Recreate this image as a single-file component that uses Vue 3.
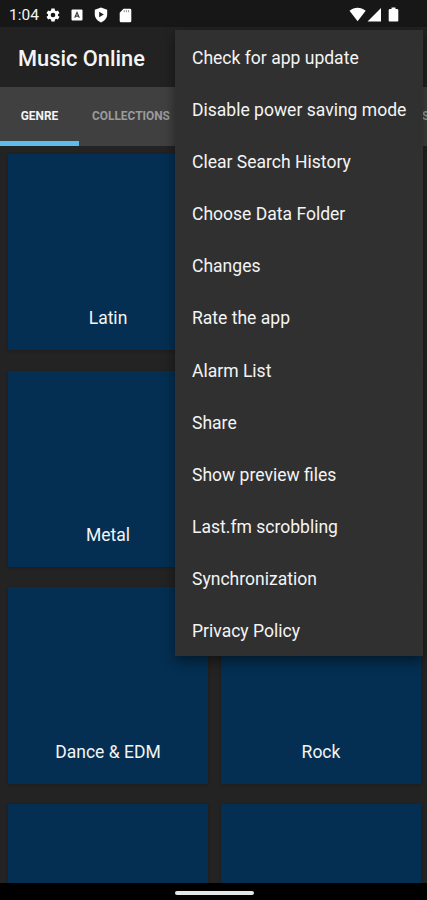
<script setup>
const menu = [
  'Check for app update',
  'Disable power saving mode',
  'Clear Search History',
  'Choose Data Folder',
  'Changes',
  'Rate the app',
  'Alarm List',
  'Share',
  'Show preview files',
  'Last.fm scrobbling',
  'Synchronization',
  'Privacy Policy',
]
const genres = ['Latin', '', 'Metal', '', 'Dance & EDM', 'Rock', '', '']
</script>

<template>
  <div class="screen">
    <header class="status">
      <span class="clock">1:04</span>
      <svg class="gear" viewBox="0 0 24 24"><path fill="#fff" fill-rule="evenodd" d="M19.4 13a7.8 7.8 0 0 0 0-2l2.3-1.800-2.300-4-2.700 1.100a7.500 7.500 0 0 0-1.800-1L14.500 2.400h-5L9.100 5.300a7.500 7.500 0 0 0-1.800 1L4.600 5.200l-2.300 4L4.600 11a7.800 7.800 0 0 0 0 2l-2.300 1.800 2.300 4 2.700-1.100a7.500 7.500 0 0 0 1.800 1l.4 2.900h5l.4-2.900a7.500 7.500 0 0 0 1.800-1l2.700 1.100 2.300-4zM12 15.500a3.500 3.500 0 1 1 0-7 3.500 3.500 0 0 1 0 7z" /></svg>
      <svg class="badge" viewBox="0 0 12 12"><rect x=".5" y=".5" width="11" height="11" rx="1" fill="#fff" /><path d="M3.700 8.700 6 3.400l2.300 5.300M4.600 7.100h2.800" fill="none" stroke="#333" stroke-width="1.100" /></svg>
      <svg class="shield" viewBox="0 0 14 16"><path d="M7 .5 13.200 2.700v4.600c0 3.800-2.600 6.700-6.200 8.200C3.400 14 .8 11.100.8 7.300V2.700z" fill="#fff" /><path d="M5.200 4.700v5.600L9.800 7.500z" fill="#222" /></svg>
      <svg class="card" viewBox="0 0 13 15"><path d="M4.500.8H11A1.300 1.300 0 0 1 12.300 2v11a1.300 1.300 0 0 1-1.300 1.300H2A1.300 1.300 0 0 1 .7 13V4.800z" fill="#fff" /><path d="M5.200 2.200v2M7.400 2.200v2M9.600 2.200v2" stroke="#888" stroke-width="1" /></svg>
      <svg class="signals" viewBox="0 0 50 16"><path d="M.5 3.800C5.500-.2 11.700-.2 16.700 3.800L8.600 14.300zM32 1v13.500H18.500zM41 2h1.500V.5h4V2H48q1.300 0 1.300 1v10.700q0 .8-.8.8h-8q-.8 0-.8-.8V3q0-1 1.300-1z" fill="#fff" /></svg>
    </header>
    <div class="appbar"><h1>Music Online</h1></div>
    <nav class="tabs">
      <div class="tab active">GENRE</div>
      <div class="tab second">COLLECTIONS</div>
      <div class="tab last">S</div>
    </nav>
    <main class="grid">
      <section v-for="(genre, i) in genres" :key="i" class="tile">
        <span>{{ genre }}</span>
      </section>
    </main>
    <footer class="navbar"><div class="handle"></div></footer>
    <ul class="menu">
      <li v-for="item in menu" :key="item">{{ item }}</li>
    </ul>
  </div>
</template>

<style>
body {
  background: #222;
}
</style>

<style scoped>
.screen {
  position: relative;
  display: flex;
  flex-direction: column;
  width: 427px;
  height: 900px;
  overflow: hidden;
  background: #232323;
  color: #f4f4f4;
  font-family: Roboto, sans-serif;
}
.status {
  display: flex;
  flex: none;
  align-items: center;
  box-sizing: border-box;
  height: 27px;
  padding: 3px 28px 0 9px;
  background: #171717;
}
.clock {
  width: 36px;
  font-size: 15.500px;
  line-height: 20px;
}
.gear {
  width: 16px;
  height: 16px;
  margin-right: 10px;
}
.badge {
  width: 12px;
  height: 12px;
  margin-right: 11px;
}
.shield {
  width: 14px;
  height: 16px;
  margin-right: 11px;
}
.card {
  width: 13px;
  height: 15px;
}
.signals {
  width: 50px;
  height: 16px;
  margin-left: auto;
}
.appbar {
  display: flex;
  flex: none;
  align-items: center;
  height: 60px;
  padding-left: 18px;
  background: #222;
}
h1 {
  margin: 3px 0 0;
  font-size: 21.800px;
  font-weight: 500;
  line-height: 28px;
}
.tabs {
  display: flex;
  flex: none;
  height: 59px;
  background: #404040;
  font-size: 11.900px;
  font-weight: 700;
  line-height: 59px;
}
.tab {
  box-sizing: border-box;
  color: #9b9b9b;
  white-space: nowrap;
}
.active {
  width: 79px;
  border-bottom: 5px solid #5dbcec;
  color: #f4f4f4;
  text-align: center;
}
.second {
  margin-left: 13px;
}
.last {
  margin-left: auto;
  width: 5px;
}
.grid {
  display: grid;
  flex: 1;
  grid-template-columns: 200px 200px;
  grid-auto-rows: 196.300px;
  gap: 20.400px 13px;
  min-height: 0;
  padding: 8px 8px 0;
  overflow: hidden;
}
.tile {
  display: flex;
  align-items: flex-end;
  justify-content: center;
  box-sizing: border-box;
  padding-bottom: 21px;
  background: #042f52;
  box-shadow: 0 1px 3px #0003;
  font-size: 17.500px;
  line-height: 22px;
}
.navbar {
  display: flex;
  flex: none;
  justify-content: center;
  box-sizing: border-box;
  height: 17px;
  padding: 8px 0 0 1px;
  background: #000;
}
.handle {
  width: 79px;
  height: 4px;
  border-radius: 2px;
  background: #e6e6e6;
}
.menu {
  position: absolute;
  top: 30px;
  left: 175px;
  box-sizing: border-box;
  width: 248px;
  height: 626px;
  margin: 0;
  padding: 2px 0 0 17px;
  background: #303030;
  box-shadow: 0 5px 12px #0007;
  list-style: none;
}
.menu li {
  height: 52.100px;
  font-size: 17.550px;
  line-height: 52px;
  white-space: nowrap;
}
</style>
